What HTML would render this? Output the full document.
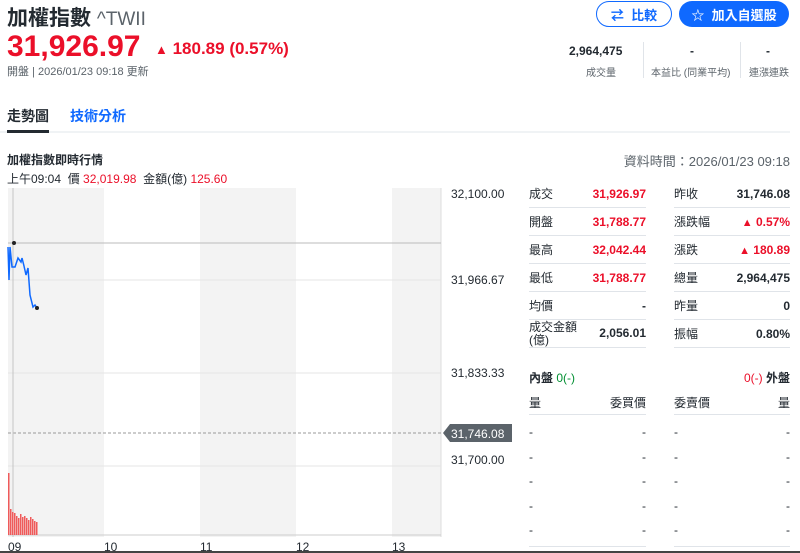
<!DOCTYPE html>
<html><head><meta charset="utf-8"><style>
*{margin:0;padding:0;box-sizing:border-box}
body{width:800px;height:553px;overflow:hidden;background:#fff;font-family:"Liberation Sans","Noto Sans CJK TC",sans-serif;color:#232a31;position:relative}
.a{position:absolute;white-space:nowrap}
.r{color:#eb0f29}.g{color:#008f31}
.btn{position:absolute;height:26px;border-radius:13px;font-size:13px;font-weight:bold;display:flex;align-items:center;justify-content:center}
.row{position:absolute;height:28px;border-bottom:1px solid #e0e4e9;font-size:12px;display:flex;align-items:center;justify-content:space-between}
.b{font-weight:bold}
</style></head><body>
<div class="a" style="left:7px;top:2px;font-size:21px;font-weight:bold">加權指數 <span style="font-weight:normal;color:#5b636a;font-size:19px">^TWII</span></div>
<div class="a r b" style="left:7px;top:30px;font-size:30px">31,926.97</div>
<div class="a r b" style="left:155px;top:39px;font-size:17px"><span style="font-size:13px">▲</span> 180.89 (0.57%)</div>
<div class="a" style="left:7px;top:63px;font-size:11px;color:#5b636a">開盤 | 2026/01/23 09:18 更新</div>
<div class="btn" style="left:596px;top:1px;width:76px;border:1.5px solid #0f69ff;color:#0f69ff">⇄&nbsp; 比較</div>
<div class="btn" style="left:679px;top:1px;width:110px;background:#0f69ff;color:#fff">☆&nbsp; 加入自選股</div>
<div class="a b" style="left:569px;top:44px;font-size:12px">2,964,475</div>
<div class="a" style="left:586px;top:64px;font-size:10px;color:#5b636a">成交量</div>
<div style="position:absolute;left:643px;top:42px;width:1px;height:36px;background:#e0e4e9"></div>
<div style="position:absolute;left:740px;top:42px;width:1px;height:36px;background:#e0e4e9"></div>
<div class="a b" style="left:690px;top:44px;font-size:12px">-</div>
<div class="a" style="left:651px;top:64px;font-size:10px;color:#5b636a">本益比 (同業平均)</div>
<div class="a b" style="left:766px;top:44px;font-size:12px">-</div>
<div class="a" style="left:749px;top:64px;font-size:10px;color:#5b636a">連漲連跌</div>
<div class="a b" style="left:7px;top:106px;font-size:14px">走勢圖</div>
<div class="a b" style="left:70px;top:106px;font-size:14px;color:#0f69ff">技術分析</div>
<div style="position:absolute;left:0;top:131px;width:790px;height:2px;background:#f0f3f5"></div>
<div style="position:absolute;left:7px;top:130px;width:42px;height:3px;background:#232a31"></div>
<div class="a b" style="left:7px;top:151px;font-size:12px">加權指數即時行情</div>
<div class="a" style="right:10px;top:151px;font-size:13px;color:#5b636a">資料時間：2026/01/23 09:18</div>
<div class="a" style="left:7px;top:170px;font-size:12px">上午09:04 &nbsp;價 <span class="r">32,019.98</span> &nbsp;金額(億) <span class="r">125.60</span></div>
<svg class="a" style="left:0;top:186px" width="520" height="367">
<rect x="8" y="2" width="96" height="349" fill="#f3f3f3"/>
<rect x="200" y="2" width="96" height="349" fill="#f3f3f3"/>
<rect x="392" y="2" width="49" height="349" fill="#f3f3f3"/>
<line x1="441" y1="2" x2="441" y2="351" stroke="#ddd"/>
<g stroke="#e4e4e4"><line x1="8" y1="94" x2="441" y2="94"/><line x1="8" y1="187" x2="441" y2="187"/><line x1="8" y1="280" x2="441" y2="280"/></g>
<line x1="8" y1="57" x2="441" y2="57" stroke="#bbb"/>
<line x1="8" y1="247" x2="441" y2="247" stroke="#999" stroke-dasharray="3,2"/>
<line x1="13" y1="2" x2="13" y2="351" stroke="#c4c4c4"/>
<line x1="8" y1="349" x2="441" y2="349" stroke="#ccc"/>
<polyline fill="none" stroke="#0f69ff" stroke-width="1.5" points="8,61 9,94 10,61 12,81 15,81 18,72 21,76 22,72 24,80 26,89 28,82 30,109 33,121 35,119 37,122"/>
<circle cx="14" cy="57" r="2" fill="#222"/><circle cx="37" cy="122" r="2" fill="#222"/>
<g fill="#ef5a5a"><rect x="8" y="287" width="1.5" height="62"/><rect x="10" y="323" width="1.5" height="26"/><rect x="12" y="326" width="1.5" height="23"/><rect x="14" y="327" width="1.5" height="22"/><rect x="16" y="330" width="1.5" height="19"/><rect x="18" y="332" width="1.5" height="17"/><rect x="20" y="328" width="1.5" height="21"/><rect x="22" y="331" width="1.5" height="18"/><rect x="24" y="330" width="1.5" height="19"/><rect x="26" y="332" width="1.5" height="17"/><rect x="28" y="334" width="1.5" height="15"/><rect x="30" y="331" width="1.5" height="18"/><rect x="32" y="333" width="1.5" height="16"/><rect x="34" y="335" width="1.5" height="14"/><rect x="36" y="336" width="1.5" height="13"/></g>
<g font-size="12" fill="#232a31" font-family="Liberation Sans,sans-serif">
<text x="451" y="12">32,100.00</text><text x="451" y="98">31,966.67</text><text x="451" y="191">31,833.33</text><text x="451" y="278">31,700.00</text>
<text x="8" y="365">09</text><text x="104" y="365">10</text><text x="200" y="365">11</text><text x="296" y="365">12</text><text x="392" y="365">13</text></g>
<path d="M450 238 H512 V256 H450 L443 247 Z" fill="#5b636a"/>
<text x="451" y="252" font-size="12" fill="#fff" font-family="Liberation Sans,sans-serif">31,746.08</text>
</svg>
<div class="row" style="left:529px;top:180px;width:117px"><span>成交</span><span class="r b">31,926.97</span></div>
<div class="row" style="left:529px;top:208px;width:117px"><span>開盤</span><span class="r b">31,788.77</span></div>
<div class="row" style="left:529px;top:236px;width:117px"><span>最高</span><span class="r b">32,042.44</span></div>
<div class="row" style="left:529px;top:264px;width:117px"><span>最低</span><span class="r b">31,788.77</span></div>
<div class="row" style="left:529px;top:292px;width:117px"><span>均價</span><span class="b">-</span></div>
<div class="row" style="left:529px;top:320px;width:117px;height:28px;line-height:13px"><span>成交金額<br>(億)</span><span class="b">2,056.01</span></div>
<div class="row" style="left:674px;top:180px;width:116px"><span>昨收</span><span class="b">31,746.08</span></div>
<div class="row" style="left:674px;top:208px;width:116px"><span>漲跌幅</span><span class="r b"><span style="font-size:11px">▲</span> 0.57%</span></div>
<div class="row" style="left:674px;top:236px;width:116px"><span>漲跌</span><span class="r b"><span style="font-size:11px">▲</span> 180.89</span></div>
<div class="row" style="left:674px;top:264px;width:116px"><span>總量</span><span class="b">2,964,475</span></div>
<div class="row" style="left:674px;top:292px;width:116px"><span>昨量</span><span class="b">0</span></div>
<div class="row" style="left:674px;top:320px;width:116px"><span>振幅</span><span class="b">0.80%</span></div>
<div class="a" style="left:529px;top:369px;font-size:12px"><b>內盤</b> <span class="g">0(-)</span></div>
<div class="a" style="right:10px;top:369px;font-size:12px"><span class="r">0(-)</span> <b>外盤</b></div>
<div class="row" style="left:529px;top:390px;width:117px;height:25px"><span>量</span><span>委買價</span></div>
<div class="row" style="left:674px;top:390px;width:116px;height:25px"><span>委賣價</span><span>量</span></div>
<div class="a" style="left:529px;top:420px;width:117px;font-size:12px;line-height:24.5px">-<span style="float:right">-</span><br>-<span style="float:right">-</span><br>-<span style="float:right">-</span><br>-<span style="float:right">-</span><br>-<span style="float:right">-</span></div>
<div class="a" style="left:674px;top:420px;width:116px;font-size:12px;line-height:24.5px">-<span style="float:right">-</span><br>-<span style="float:right">-</span><br>-<span style="float:right">-</span><br>-<span style="float:right">-</span><br>-<span style="float:right">-</span></div>
<div style="position:absolute;left:529px;top:546px;width:117px;height:1px;background:#e0e4e9"></div>
<div style="position:absolute;left:674px;top:546px;width:116px;height:1px;background:#e0e4e9"></div>
<div style="position:absolute;left:0;top:551px;width:800px;height:2px;background:#444"></div>
</body></html>
